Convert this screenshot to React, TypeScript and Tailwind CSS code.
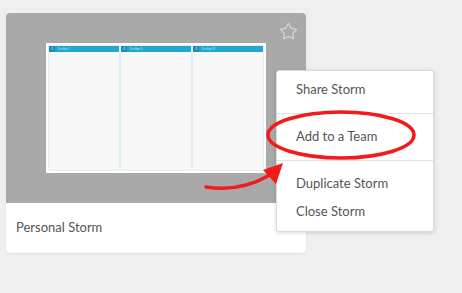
import { Star } from 'lucide-react';

const items = [
  { label: 'Share Storm', divider: true },
  { label: 'Add to a Team', divider: true },
  { label: 'Duplicate Storm', divider: false },
  { label: 'Close Storm', divider: false },
];

function Thumbnail() {
  return (
    <div className="w-[220px] h-[130px] bg-white p-[2px]">
      <div className="grid grid-cols-3 gap-[2px] h-full bg-[#e1f0f6] p-[1px]">
        {['Section I', 'Section II', 'Section III'].map((s, i) => (
          <div key={s} className="flex flex-col bg-[#f7f7f7]">
            <div className="flex items-center h-[6px] bg-[#22a7d4]">
              <span className="w-[6px] h-full bg-[#1b8cb3] text-[3px] text-white leading-[6px] text-center">{i + 1}</span>
              <span className="ml-[3px] text-[3px] leading-[6px] text-[#bfe6f3]">{s}</span>
            </div>
          </div>
        ))}
      </div>
    </div>
  );
}

export default function App() {
  return (
    <main className="relative w-[462px] h-[293px] bg-[#efefef] overflow-hidden font-['Lato',sans-serif]">
      <div className="pt-[13px] pl-[6px]">
        <div className="w-[300px] rounded-[4px] bg-white overflow-hidden shadow-[0_1px_2px_rgba(0,0,0,0.08)]">
          <div className="relative h-[190px] bg-[#a9a9a9] flex justify-center pt-[30px]">
            <Thumbnail />
            <Star className="absolute top-[9px] right-[8px] text-[#d6d6d6]" size={19} strokeWidth={1.6} />
          </div>
          <div className="h-[50px] flex items-center px-[10px] text-[13px] text-[#555]">Personal Storm</div>
        </div>
      </div>

      <div className="absolute left-[276px] top-[70px] w-[158px] rounded-[3px] bg-white border border-[#dadada] shadow-[0_1px_4px_rgba(0,0,0,0.15)] pt-[5px] pb-[5px]">
        {items.map((it) => (
          <div key={it.label}>
            <div className="h-[28px] flex items-center px-[19px] text-[13px] text-[#555]">{it.label}</div>
            {it.divider && <div className="my-[9px] h-px bg-[#e3e3e3]" />}
          </div>
        ))}
      </div>

      <svg className="absolute left-0 top-0" width="462" height="293" viewBox="0 0 462 293">
        <ellipse cx="341" cy="135" rx="73" ry="23" fill="none" stroke="#f21b1b" strokeWidth="3.5" />
        <path d="M206 187 Q240 192 268 176" fill="none" stroke="#f21b1b" strokeWidth="3.5" strokeLinecap="round" />
        <polygon points="283,163 263,170 276,184" fill="#f21b1b" />
      </svg>
    </main>
  );
}
